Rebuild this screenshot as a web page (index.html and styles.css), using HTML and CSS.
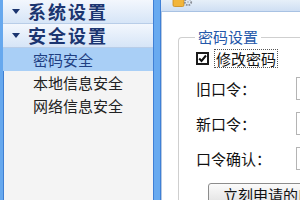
FILE: index.html
```html
<!DOCTYPE html>
<html lang="zh-CN">
<head>
<meta charset="utf-8">
<link rel="stylesheet" href="styles.css">
</head>
<body>
<div class="app">
  <aside class="sidebar">
    <div class="group"><svg class="tri" width="8" height="5" viewBox="0 0 8 5"><path d="M0 0H8L4 5Z" fill="#1b3570"/></svg><span>系统设置</span></div>
    <div class="group"><svg class="tri" width="8" height="5" viewBox="0 0 8 5"><path d="M0 0H8L4 5Z" fill="#1b3570"/></svg><span>安全设置</span></div>
    <div class="item active">密码安全</div>
    <div class="item">本地信息安全</div>
    <div class="item">网络信息安全</div>
  </aside>
  <div class="splitter"></div>
  <main class="content">
    <div class="titlebar">
      <svg class="ico" width="22" height="8" viewBox="0 0 22 8">
        <rect x="1" y="-3" width="11" height="9.5" rx="1.5" fill="#f2b53a" stroke="#c98a1c" stroke-width="0.8"/>
        <circle cx="16" cy="2" r="3.2" fill="none" stroke="#8a8f97" stroke-width="1.8" stroke-dasharray="1.6 1.1"/>
        <circle cx="16" cy="2" r="1.2" fill="#c3c7ce"/>
      </svg>
    </div>
    <div class="panel">
      <fieldset class="box">
        <legend>密码设置</legend>
        <label class="check">
          <span class="cb"><svg width="9" height="9" viewBox="0 0 9 9"><path d="M1.2 4.5L3.5 7L8 1.5" fill="none" stroke="#111" stroke-width="2"/></svg></span>
          <span class="cap">修改密码</span>
        </label>
        <div class="row"><span class="lbl">旧口令：</span><span class="inp"></span></div>
        <div class="row"><span class="lbl">新口令：</span><span class="inp"></span></div>
        <div class="row"><span class="lbl">口令确认：</span><span class="inp"></span></div>
        <div class="btn">立刻申请的口令</div>
      </fieldset>
    </div>
  </main>
</div>
</body>
</html>
```
FILE: styles.css
```css
html, body {
  margin: 0;
  padding: 0;
  width: 300px;
  height: 200px;
  overflow: hidden;
  background: #fff;
  font-family: "Noto Sans CJK SC", "Noto Sans", sans-serif;
}
.app {
  display: flex;
  width: 300px;
  height: 200px;
  overflow: hidden;
}
.sidebar {
  width: 150px;
  flex: none;
  background: #f4f4f4;
  border-left: 3px solid #66a8ee;
  box-shadow: inset 1px 0 0 #3f7fd2;
  display: flex;
  flex-direction: column;
}
.group {
  height: 23px;
  border-bottom: 1px solid #b8cde8;
  background: linear-gradient(#f3f7fd, #d6e5f7);
  display: flex;
  align-items: center;
  color: #1b3570;
  font-weight: bold;
  font-size: 18px;
  line-height: 23px;
  letter-spacing: 2px;
}
.tri {
  margin: 0 8px 0 9px;
}
.item {
  height: 23px;
  line-height: 23px;
  padding-left: 30px;
  font-size: 15px;
  color: #222;
}
.item.active {
  background: #a9cff6;
  color: #1f3f82;
}
.splitter {
  width: 6px;
  flex: none;
  background: #68aaf0;
  border-left: 1px solid #3f80d6;
  border-right: 1px solid #3f80d6;
}
.content {
  flex: 1;
  display: flex;
  flex-direction: column;
  min-width: 0;
  overflow: hidden;
}
.titlebar {
  height: 11px;
  flex: none;
  background: linear-gradient(#e6eff9, #cfdff3);
  border-bottom: 1px solid #a8c2e3;
  display: flex;
  align-items: flex-start;
  overflow: hidden;
}
.ico {
  margin-left: 11px;
}
.panel {
  flex: 1;
  border-left: 1px solid #b7c9e0;
  padding: 15px 0 0 16px;
  overflow: hidden;
}
.box {
  margin: 0;
  padding: 1px 0 0 17px;
  border: 1px solid #cfcfcf;
  border-right: none;
  border-radius: 4px 0 0 4px;
  min-width: 0;
  overflow: hidden;
}
.box legend {
  padding: 0 3px;
  margin-left: -1px;
  font-size: 15px;
  line-height: 20px;
  color: #2458aa;
}
.check {
  display: flex;
  align-items: center;
  height: 20px;
}
.cb {
  width: 9px;
  height: 9px;
  border: 2px solid #1a1a1a;
  background: #fff;
  display: flex;
  margin-right: 5px;
}
.cap {
  font-size: 15px;
  line-height: 17px;
  color: #111;
  border: 1px dotted #555;
  padding: 0 1px;
}
.row {
  display: flex;
  align-items: center;
  height: 23px;
  margin-top: 12px;
  font-size: 15px;
  line-height: 20px;
  color: #111;
}
.check + .row {
  margin-top: 9px;
}
.lbl {
  width: 100px;
  flex: none;
  white-space: nowrap;
}
.inp {
  width: 100px;
  height: 21px;
  border: 1px solid #b4b4b4;
  background: #fff;
  flex: none;
}
.btn {
  margin: 13px 0 0 12px;
  height: 24px;
  width: 200px;
  border: 1px solid #8c8c8c;
  border-radius: 3px;
  background: linear-gradient(#fbfbfb, #dcdcdc);
  padding-left: 14px;
  font-size: 15px;
  line-height: 22px;
  color: #111;
  white-space: nowrap;
  overflow: hidden;
}
```
